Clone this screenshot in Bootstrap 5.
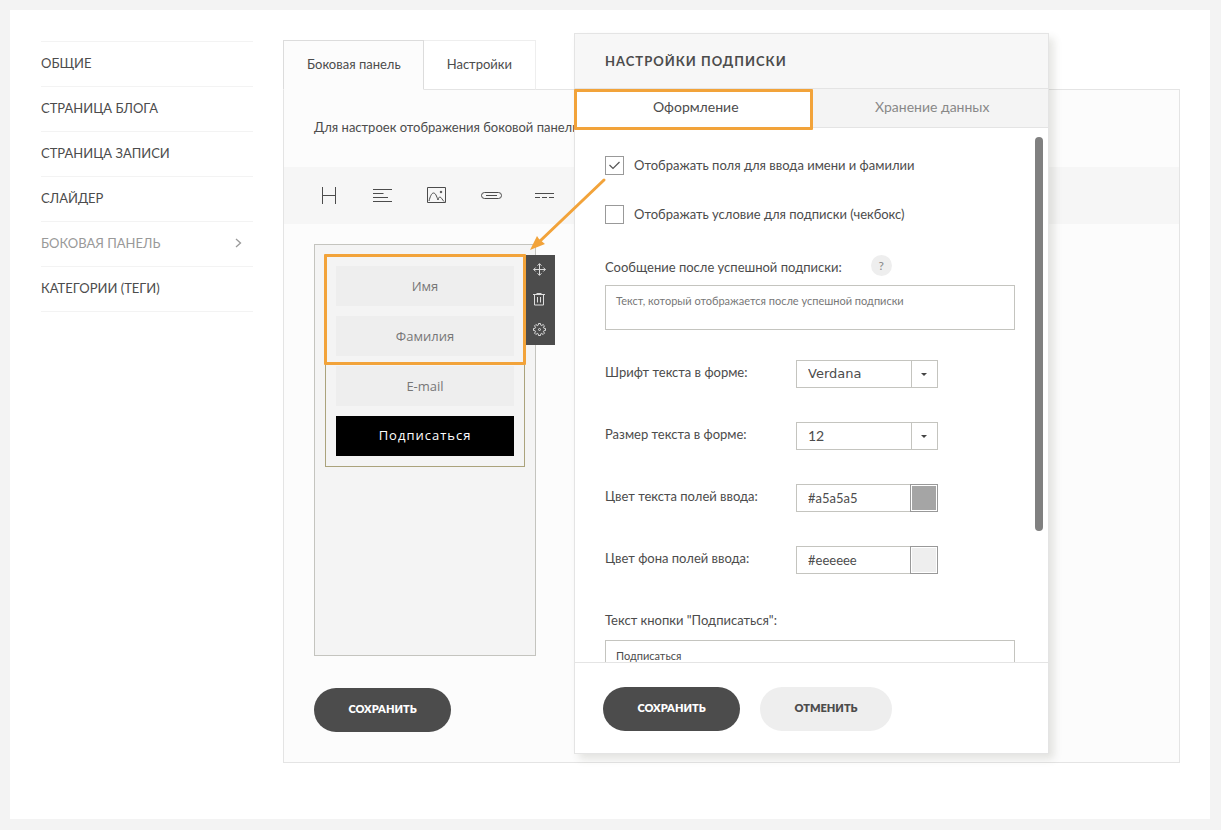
<!DOCTYPE html>
<html lang="ru">
<head>
<meta charset="utf-8">
<meta name="viewport" content="width=device-width, initial-scale=1">
<title>Настройки подписки</title>
<link href="https://cdn.jsdelivr.net/npm/bootstrap@5.3.0/dist/css/bootstrap.min.css" rel="stylesheet">
<style>
:root{--ink:#4c4c4c;--line:#e4e4e4;--field:#c4c4bf;--accent:#f2a33a}
body{background:#f3f3f3;color:var(--ink);font-family:Lato,"Open Sans",sans-serif;font-size:13px;line-height:20px;padding:10px 11px 11px 10px}
a{color:inherit;text-decoration:none}
svg{fill:none;stroke:currentColor;display:block}
.sheet{background:#fff;min-height:calc(100vh - 21px);padding:30px 30px 56px 31px;gap:30px}
.side{width:212px;margin-top:1px;border-top:1px solid #f3f3f3}
.side a{height:45px;border-bottom:1px solid #f3f3f3;padding:0 11px 2px 0}
.side a.current{color:#999}
.work{min-width:0}
.tab-link{height:50px;background:#fff;border:1px solid #eee;border-bottom-color:var(--line);padding:0 23px 2px;margin-bottom:-1px;position:relative;color:inherit;border-left:0}
.tab-link.active{background:#fcfcfc;border:1px solid #dcdcdc;border-bottom-color:#fcfcfc;padding:0 22px 2px 23px}
.pane{background:#fcfcfc;border:1px solid var(--line);padding-bottom:30px}
.intro{padding:27px 30px 30px}
.tools{background:#f6f6f6;height:57px;padding-left:18px}
.tools .btn{width:54px;color:var(--ink);padding:0;border:0}
.preview{width:222px;height:412px;background:#f4f4f4;border:1px solid var(--field);margin:20px 30px 32px;padding:10px}
.form-block{border:1px solid #aba37c;padding:10px;gap:10px;position:relative}
.field,.field:focus,.send{height:40px;border:0;border-radius:0;font-family:"Open Sans","Noto Sans",sans-serif;font-size:13px;text-align:center}
.field{background:#eee}
.field::placeholder{color:#777;opacity:1}
.send,.send:hover{background:#000;color:#fff;letter-spacing:1px}
.mark-frame{position:absolute;border:3px solid var(--accent);border-radius:1px;pointer-events:none}
.mark-fields{left:-2px;right:-2px;top:-2px;height:111px}
.mark-tab{inset:0 -1px -3px -1px}
.block-tools{position:absolute;left:100%;top:-1px;margin-left:2px;width:29px;background:var(--ink);color:#ddd}
.block-tools .btn{color:inherit;height:30px;padding:0 3px 1px 0;border:0}
.pill{height:44px;border:0;border-radius:22px;font-size:11px;font-weight:800;line-height:20px;padding-bottom:8px}
.pill-dark,.pill-dark:hover{background:var(--ink);color:#fff;width:137px}
.pill-light,.pill-light:hover{background:#eee;color:var(--ink);width:132px}
.pane>.pill{margin-left:30px}
.settings{position:absolute;left:291px;top:-7px;width:475px;height:721px;background:#fff;border:1px solid var(--line);box-shadow:5px 5px 8px rgba(60,60,40,.13)}
.settings h2{height:55px;background:#f7f7f7;border-bottom:1px solid var(--line);font-size:13px;font-weight:700;letter-spacing:1px;padding:2px 0 0 30px}
.settings .half{width:50%;height:39px;background:#f4f4f4;border:0;border-bottom:1px solid var(--line);color:#888;position:relative;padding:0 0 2px 5px;font-size:14px}
.settings .half.active{background:#fff;color:var(--ink)}
.settings-body{padding:28px 33px 0 30px;overflow:hidden;min-height:0;position:relative}
.check-row{height:19px;margin-bottom:30px}
.check-row label{padding-bottom:1px}
.tick{appearance:none;width:19px;height:19px;margin:0 10px 0 0;border:1px solid #999;background:#fff}
.tick:checked{background:url("data:image/svg+xml,%3Csvg xmlns='http://www.w3.org/2000/svg' viewBox='0 0 17 17'%3E%3Cpath d='M3.500 8l3.500 3.500 6.500-6.500' fill='none' stroke='%23555' stroke-width='1.200'/%3E%3C/svg%3E")}
.help{width:21px;height:21px;border-radius:50%;background:#eee;color:#888;border:0;padding:0;font-size:12px;line-height:20px;margin:1px 0 0 29px}
.box,.box:focus{border:1px solid var(--field);border-radius:0;font-size:11px;line-height:16px;padding:7px 10px;resize:none;color:var(--ink)}
.box::placeholder{color:#777;opacity:1}
.message{height:45px;margin:8px 0 30px}
.message-label{padding-top:3px}
.caption-label{padding:2px 0}
.setting{height:28px;margin-bottom:34px}
.setting label{width:191px;padding-bottom:4px}
.pick{appearance:none;width:142px;height:28px;border:1px solid var(--field);border-radius:0;padding:0 30px 0 11px;font-size:14px;color:var(--ink);background:url("data:image/svg+xml,%3Csvg xmlns='http://www.w3.org/2000/svg' width='26' height='26'%3E%3Cpath d='M.5 0v26' stroke='%23c4c4bf'/%3E%3Cpath d='M10 12h6l-3 3z' fill='%23444'/%3E%3C/svg%3E") right top no-repeat #fff}
.pick-font{font-family:"DejaVu Sans",sans-serif;font-size:13px}
.hex{width:115px;height:28px;border:1px solid var(--field);border-right:0;border-radius:0;padding:0 11px;font-size:13px;color:var(--ink)}
.swatch{width:28px;height:28px;border:1px solid #999;padding:1px;background:#fff;margin-left:-1px}
.swatch span{display:block;height:100%}
.thumb{position:absolute;right:5px;top:9px;width:8px;height:394px;border-radius:4px;background:#808080}
.settings-foot{border-top:1px solid var(--line);padding:24px 28px 22px;gap:20px}
.pointer{position:absolute;left:-45px;top:143px;color:var(--accent);pointer-events:none}
</style>
</head>
<body>
<div class="sheet d-flex align-items-start">
  <nav class="side flex-shrink-0" aria-label="Разделы">
    <a href="#" class="d-flex align-items-center">ОБЩИЕ</a>
    <a href="#" class="d-flex align-items-center">СТРАНИЦА БЛОГА</a>
    <a href="#" class="d-flex align-items-center">СТРАНИЦА ЗАПИСИ</a>
    <a href="#" class="d-flex align-items-center">СЛАЙДЕР</a>
    <a href="#" class="current d-flex align-items-center justify-content-between">БОКОВАЯ ПАНЕЛЬ
      <svg width="7" height="10" stroke-width="1.300"><path d="M1 1l4.500 4L1 9"/></svg></a>
    <a href="#" class="d-flex align-items-center">КАТЕГОРИИ (ТЕГИ)</a>
  </nav>

  <main class="work flex-grow-1 position-relative">
    <div class="d-flex">
      <button type="button" class="tab-link active">Боковая панель</button>
      <button type="button" class="tab-link">Настройки</button>
    </div>
    <section class="pane">
      <div class="intro text-nowrap overflow-hidden">Для настроек отображения боковой панели</div>
      <div class="tools d-flex align-items-center">
        <button type="button" class="btn d-flex justify-content-center" aria-label="Заголовок"><svg width="14" height="18"><path d="M.5 0v17M13.500 0v17M.5 8.500h13"/></svg></button>
        <button type="button" class="btn d-flex justify-content-center" aria-label="Текст"><svg width="20" height="15"><path d="M0 1.500h19M0 5.500h10.500M0 9.500h15M0 13.500h19"/></svg></button>
        <button type="button" class="btn d-flex justify-content-center" aria-label="Изображение"><svg width="20" height="17"><path d="M.5.5h18v15H.5z"/><path d="M2 14c1-4 2.500-8 4.500-8s3 3 4.500 7c.5-2 1-3 2-3s2.500 3 4 4.500"/><circle cx="14" cy="5" r=".8" fill="currentColor"/></svg></button>
        <button type="button" class="btn d-flex justify-content-center" aria-label="Кнопка"><svg width="20" height="8" overflow="visible"><rect x=".5" y=".5" width="20" height="6" rx="3"/><path d="M5 3.500h11"/></svg></button>
        <button type="button" class="btn d-flex justify-content-center" aria-label="Разделитель"><svg width="20" height="6"><path d="M0 .5h19M0 4.500h5M7 4.500h5M14 4.500h5"/></svg></button>
      </div>
      <div class="preview">
        <div class="form-block d-flex flex-column">
          <input type="text" class="form-control field" placeholder="Имя" aria-label="Имя">
          <input type="text" class="form-control field" placeholder="Фамилия" aria-label="Фамилия">
          <input type="email" class="form-control field" placeholder="E-mail" aria-label="E-mail">
          <button type="button" class="btn send">Подписаться</button>
          <div class="block-tools d-flex flex-column">
            <button type="button" class="btn d-flex align-items-center justify-content-center" aria-label="Переместить"><svg width="13" height="13"><path d="M6.500.7v11.600M.7 6.500h11.600M4.500 2.700l2-2 2 2M4.500 10.300l2 2 2-2M2.700 4.500l-2 2 2 2M10.300 4.500l2 2-2 2"/></svg></button>
            <button type="button" class="btn d-flex align-items-center justify-content-center" aria-label="Удалить"><svg width="13" height="13"><path d="M0 1.500h12M3.500.5h5M1.500 1.500v10.500h9V1.500M4.500 4v5.500M7.500 4v5.500"/></svg></button>
            <button type="button" class="btn d-flex align-items-center justify-content-center" aria-label="Настроить"><svg width="13" height="13" viewBox="-6.500 -6.500 13 13"><path stroke-linejoin="round" d="M6-1V1L4.300 1.300 3.900 2.200 5 3.600 3.600 5 2.200 3.900 1.300 4.300 1 6H-1L-1.300 4.300-2.200 3.900-3.600 5-5 3.600-3.900 2.200-4.300 1.300-6 1V-1L-4.300-1.300-3.900-2.200-5-3.600-3.600-5-2.200-3.900-1.300-4.300-1-6H1L1.300-4.300 2.200-3.900 3.600-5 5-3.600 3.900-2.200 4.300-1.300z"/><circle r="1"/></svg></button>
          </div>
          <div class="mark-frame mark-fields"></div>
        </div>
      </div>
      <button type="button" class="btn pill pill-dark">СОХРАНИТЬ</button>
    </section>

    <section class="settings d-flex flex-column">
      <h2 class="d-flex align-items-center m-0 flex-shrink-0">НАСТРОЙКИ ПОДПИСКИ</h2>
      <div class="d-flex flex-shrink-0">
        <button type="button" class="half active z-1">Оформление<span class="mark-frame mark-tab"></span></button>
        <button type="button" class="half">Хранение данных</button>
      </div>
      <div class="settings-body flex-grow-1">
        <div class="check-row d-flex align-items-center"><input type="checkbox" class="tick" id="names" checked><label for="names">Отображать поля для ввода имени и фамилии</label></div>
        <div class="check-row d-flex align-items-center"><input type="checkbox" class="tick" id="terms"><label for="terms">Отображать условие для подписки (чекбокс)</label></div>
        <div class="d-flex align-items-start"><label for="msg" class="message-label">Сообщение после успешной подписки:</label><button type="button" class="help" aria-label="Справка">?</button></div>
        <textarea id="msg" class="box message form-control" placeholder="Текст, который отображается после успешной подписки"></textarea>
        <div class="setting d-flex align-items-center"><label for="font">Шрифт текста в форме:</label><select id="font" class="pick pick-font"><option>Verdana</option></select></div>
        <div class="setting d-flex align-items-center"><label for="size">Размер текста в форме:</label><select id="size" class="pick"><option>12</option></select></div>
        <div class="setting d-flex align-items-center"><label for="fg">Цвет текста полей ввода:</label><input id="fg" type="text" class="hex" value="#a5a5a5"><button type="button" class="swatch" aria-label="Выбрать цвет"><span style="background:#a5a5a5"></span></button></div>
        <div class="setting d-flex align-items-center"><label for="bg">Цвет фона полей ввода:</label><input id="bg" type="text" class="hex" value="#eeeeee"><button type="button" class="swatch" aria-label="Выбрать цвет"><span style="background:#eee"></span></button></div>
        <label for="cap" class="d-block caption-label">Текст кнопки "Подписаться":</label>
        <input id="cap" type="text" class="box form-control mt-2" value="Подписаться">
        <div class="thumb"></div>
      </div>
      <div class="settings-foot d-flex flex-shrink-0">
        <button type="button" class="btn pill pill-dark">СОХРАНИТЬ</button>
        <button type="button" class="btn pill pill-light">ОТМЕНИТЬ</button>
      </div>
      <svg class="pointer" width="78" height="75"><path d="M74 3L9 65" stroke-width="3" stroke-linecap="round"/><path d="M0 73L7 59 9 62 15 67z" fill="currentColor" stroke="none"/></svg>
    </section>
  </main>
</div>
<script src="https://cdn.jsdelivr.net/npm/bootstrap@5.3.0/dist/js/bootstrap.bundle.min.js"></script>
</body>
</html>
